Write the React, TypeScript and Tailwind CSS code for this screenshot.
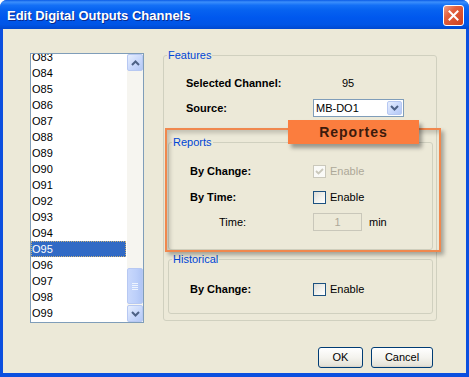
import clsx from 'clsx'

const channels = Array.from({ length: 17 }, (_, i) => `O${83 + i}`)
const selected = 'O95'

function Chevron({ dir }: { dir: 'up' | 'down' }) {
  return (
    <svg width="9" height="6" viewBox="0 0 9 6">
      <path
        d={dir === 'up' ? 'M1 5 L4.5 1.5 L8 5' : 'M1 1 L4.5 4.5 L8 1'}
        fill="none"
        stroke="#4D6185"
        strokeWidth="2"
      />
    </svg>
  )
}

function ScrollButton({ dir }: { dir: 'up' | 'down' }) {
  return (
    <div className="h-[17px] flex items-center justify-center rounded-[2px] border border-[#B7C8F2] bg-[linear-gradient(135deg,#E6EEFE_0%,#C6D6FB_60%,#B4C8F5_100%)]">
      <Chevron dir={dir} />
    </div>
  )
}

function CheckBox({ checked, disabled }: { checked?: boolean; disabled?: boolean }) {
  return (
    <span
      className={clsx(
        'w-[13px] h-[13px] border flex items-center justify-center shrink-0',
        disabled
          ? 'border-[#CAC8BB] bg-[#FAFAF7]'
          : 'border-[#1C5180] bg-[linear-gradient(135deg,#DCDCD7_0%,#F4F4F0_60%,#FFFFFF_100%)]'
      )}
    >
      {checked && (
        <svg width="9" height="9" viewBox="0 0 9 9">
          <path d="M1 4 L3.5 6.5 L8 2" fill="none" stroke={disabled ? '#CAC8BB' : '#21A121'} strokeWidth="1.8" />
        </svg>
      )}
    </span>
  )
}

function Option({ label, checked, disabled }: { label: string; checked?: boolean; disabled?: boolean }) {
  return (
    <div className="flex items-center gap-[4px]">
      <CheckBox checked={checked} disabled={disabled} />
      <span className={disabled ? 'text-[#ACA899]' : 'text-black'}>{label}</span>
    </div>
  )
}

function XpButton({ label, width }: { label: string; width: string }) {
  return (
    <button
      className={clsx(
        width,
        'h-[21px] rounded-[3px] border border-[#003C74] text-[11px] text-black bg-[linear-gradient(to_bottom,#FFFFFF_0%,#F4F3EE_50%,#E6E4DA_90%,#D6D0C5_100%)]'
      )}
    >
      {label}
    </button>
  )
}

export default function App() {
  return (
    <div className="w-[469px] h-[377px] relative flex flex-col bg-[#0B4FDF] rounded-t-[7px] overflow-hidden font-['Liberation_Sans',Arial,sans-serif] text-[11px] text-black">
      {/* Title bar */}
      <div className="h-[29px] shrink-0 flex items-center justify-between pl-[7px] pr-[5px] pt-[2px] bg-[linear-gradient(to_bottom,#0A5BE6_0%,#3C8FFB_7%,#1470F6_18%,#0662F0_35%,#0058EE_60%,#0055E6_85%,#0048CF_100%)]">
        <span className="text-white font-bold text-[13px] [text-shadow:1px_1px_#0A2A8A]">
          Edit Digital Outputs Channels
        </span>
        <div className="w-[21px] h-[21px] rounded-[3px] border border-white flex items-center justify-center bg-[linear-gradient(135deg,#F0A08A_0%,#E2603E_35%,#D0401E_100%)]">
          <svg width="11" height="11" viewBox="0 0 11 11">
            <path d="M1.5 1.5 L9.5 9.5 M9.5 1.5 L1.5 9.5" stroke="white" strokeWidth="2" strokeLinecap="square" />
          </svg>
        </div>
      </div>

      {/* Body */}
      <div className="flex-1 mx-[3px] mb-[4px] bg-[#ECE9D8] flex flex-col">
        <div className="flex items-start pl-[27px] pt-[20px]">
          {/* Channel list */}
          <div className="mt-[4px] w-[114px] h-[270px] border border-[#7F9DB9] bg-white flex">
            <div className="w-[96px] overflow-hidden">
              <div className="-mt-[5px]">
                {channels.map((c) => (
                  <div
                    key={c}
                    className={clsx(
                      'h-[16px] leading-[16px] pl-[1px] mr-[1px]',
                      c === selected && 'bg-[#316AC5] text-white outline-1 outline-dotted outline-[#C9B27C] -outline-offset-1'
                    )}
                  >
                    {c}
                  </div>
                ))}
              </div>
            </div>
            <div className="w-[16px] flex flex-col bg-[#F6F5F0]">
              <ScrollButton dir="up" />
              <div className="flex-1" />
              <div className="h-[36px] mb-[1px] flex flex-col items-center justify-center gap-[1px] rounded-[2px] border border-[#B7C8F2] bg-[linear-gradient(90deg,#C9D8FC_0%,#BCCFFA_60%,#B0C5F5_100%)]">
                {[0, 1, 2, 3].map((i) => (
                  <span key={i} className="block w-[6px] h-[1px] bg-[#EEF4FE]" />
                ))}
              </div>
              <ScrollButton dir="down" />
            </div>
          </div>

          {/* Features */}
          <fieldset className="ml-[19px] w-[274px] h-[272px] border border-[#D0D0BF] rounded-[3px] flex flex-col">
            <legend className="ml-[3px] px-[1px] leading-[12px] text-[#0046D5]">Features</legend>

            <div className="mt-[14px] h-[16px] flex items-center">
              <span className="w-[149px] pl-[22px] font-bold">Selected Channel:</span>
              <span className="ml-[29px]">95</span>
            </div>

            <div className="mt-[8px] h-[18px] flex items-center">
              <span className="w-[149px] pl-[22px] font-bold">Source:</span>
              <div className="w-[91px] h-[18px] border border-[#7F9DB9] bg-white flex items-center">
                <span className="flex-1 pl-[2px]">MB-DO1</span>
                <div className="w-[15px] h-[14px] mr-[1px] flex items-center justify-center rounded-[2px] border border-[#B7C8F2] bg-[linear-gradient(135deg,#E6EEFE_0%,#C6D6FB_60%,#B4C8F5_100%)]">
                  <Chevron dir="down" />
                </div>
              </div>
            </div>

            <fieldset className="mt-[19px] ml-[4px] mr-[3px] h-[114px] border border-[#D0D0BF] rounded-[3px] flex flex-col">
              <legend className="ml-[3px] px-[1px] leading-[12px] text-[#0046D5]">Reports</legend>
              <div className="mt-[15px] h-[16px] flex items-center">
                <span className="w-[144px] pl-[21px] font-bold">By Change:</span>
                <Option label="Enable" checked disabled />
              </div>
              <div className="mt-[10px] h-[16px] flex items-center">
                <span className="w-[144px] pl-[21px] font-bold">By Time:</span>
                <Option label="Enable" />
              </div>
              <div className="mt-[8px] h-[18px] flex items-center">
                <span className="w-[144px] pl-[50px]">Time:</span>
                <div className="w-[49px] h-[18px] border border-[#C9C7BA] flex items-center justify-center text-[#ACA899]">
                  1
                </div>
                <span className="ml-[7px]">min</span>
              </div>
            </fieldset>

            <fieldset className="mt-[3px] ml-[4px] mr-[3px] h-[61px] border border-[#D0D0BF] rounded-[3px] flex flex-col">
              <legend className="ml-[3px] px-[1px] leading-[12px] text-[#0046D5]">Historical</legend>
              <div className="mt-[16px] h-[16px] flex items-center">
                <span className="w-[144px] pl-[21px] font-bold">By Change:</span>
                <Option label="Enable" />
              </div>
            </fieldset>
          </fieldset>
        </div>

        <div className="mt-[24px] flex justify-end gap-[8px] pr-[33px]">
          <XpButton label="OK" width="w-[45px]" />
          <XpButton label="Cancel" width="w-[62px]" />
        </div>
      </div>

      {/* Highlight callout over the Reports group */}
      <div className="absolute left-[165px] top-[128px] w-[276px] h-[124px] border-2 border-[#F0884E] shadow-[3px_3px_4px_rgba(0,0,0,0.3),inset_3px_3px_4px_rgba(0,0,0,0.18)] pointer-events-none" />
      <div className="absolute left-[288px] top-[120px] w-[131px] h-[24px] flex items-center justify-center bg-[#FB7D3E] shadow-[3px_4px_4px_rgba(0,0,0,0.35)] text-[14px] font-bold tracking-[1px] text-[#3C1A0C]">
        Reportes
      </div>
    </div>
  )
}
